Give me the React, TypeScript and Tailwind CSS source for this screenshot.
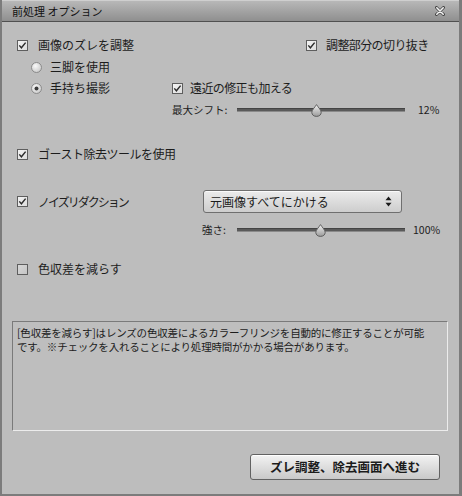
import React from "react";

const font = "font-['Noto_Sans_CJK_JP','Noto_Sans_CJK_SC',sans-serif]";

function Check({ checked = true }: { checked?: boolean }) {
  return (
    <svg width="11" height="11" viewBox="0 0 11 11" className="shrink-0">
      <defs>
        <linearGradient id={checked ? "cbg1" : "cbg0"} x1="0" y1="0" x2="1" y2="1">
          <stop offset="0" stopColor={checked ? "#f4f4f4" : "#d8d8d8"} />
          <stop offset="1" stopColor={checked ? "#dcdcdc" : "#c4c4c4"} />
        </linearGradient>
      </defs>
      <rect x="0.5" y="0.5" width="10" height="10" fill={`url(#${checked ? "cbg1" : "cbg0"})`} stroke="#5e5e5e" />
      {checked && (
        <path d="M2.3 5.4 L4.4 7.8 L8.6 2.6" fill="none" stroke="#2a2a2a" strokeWidth="1.4" />
      )}
    </svg>
  );
}

function Radio({ checked = false }: { checked?: boolean }) {
  return (
    <svg width="11" height="11" viewBox="0 0 11 11" className="shrink-0">
      <defs>
        <radialGradient id="rg" cx="0.4" cy="0.35" r="0.7">
          <stop offset="0" stopColor="#fafafa" />
          <stop offset="1" stopColor="#c8c8c8" />
        </radialGradient>
      </defs>
      <circle cx="5.5" cy="5.5" r="5" fill="url(#rg)" stroke="#8a8a8a" />
      {checked && <circle cx="5.5" cy="5.5" r="2" fill="#3a3a3a" />}
    </svg>
  );
}

function Thumb() {
  return (
    <svg width="11" height="13" viewBox="0 0 11 13">
      <defs>
        <linearGradient id="tg" x1="0" y1="0" x2="0" y2="1">
          <stop offset="0" stopColor="#f2f2f2" />
          <stop offset="1" stopColor="#9a9a9a" />
        </linearGradient>
      </defs>
      <path d="M5.5 0.6 C6.6 2.6 10.2 6 10.2 8.3 C10.2 10.8 8.2 12.4 5.5 12.4 C2.8 12.4 0.8 10.8 0.8 8.3 C0.8 6 4.4 2.6 5.5 0.6 Z" fill="url(#tg)" stroke="#555" strokeWidth="0.9" />
    </svg>
  );
}

function Slider({ pos }: { pos: number }) {
  return (
    <div className="relative w-[168px] h-[20px] flex items-center">
      <div className="w-full h-[4px] bg-[#5a5a5a] border-t border-[#444] border-b border-b-[#8a8a8a]" />
      <div className="absolute top-[4px]" style={{ left: pos }}>
        <Thumb />
      </div>
    </div>
  );
}

export default function App() {
  return (
    <div className={`${font} w-[462px] h-[496px] bg-[#bdbdbd] text-[#1c1c1c] flex flex-col border-l-2 border-r-[3px] border-b-2 border-[#7c7c7c] overflow-hidden`}>
      {/* Title bar */}
      <div className="h-[22px] shrink-0 flex items-center justify-between pl-[10px] pr-[14px] bg-gradient-to-b from-[#b8b8b8] to-[#8f8f8f] border-t border-[#cfcfcf] border-b border-b-[#505050]">
        <span className="text-[11px] leading-none text-[#111]">前処理 オプション</span>
        <svg width="10" height="10" viewBox="0 0 10 10">
          <path d="M1.5 1.5 L8.5 8.5 M8.5 1.5 L1.5 8.5" stroke="#444" strokeWidth="3" strokeLinecap="round" />
          <path d="M1.8 1.8 L8.2 8.2 M8.2 1.8 L1.8 8.2" stroke="#f4f4f4" strokeWidth="1.6" strokeLinecap="round" />
        </svg>
      </div>

      {/* Row 1 */}
      <div className="mt-[13px] h-[20px] flex items-center pl-[15px]">
        <div className="w-[289px] flex items-center gap-[10px]">
          <Check />
          <span className="text-[12px] leading-none">画像のズレを調整</span>
        </div>
        <div className="flex items-center gap-[9px]">
          <Check />
          <span className="text-[12px] leading-none tracking-[-0.6px]">調整部分の切り抜き</span>
        </div>
      </div>

      {/* Row 2 */}
      <div className="mt-[2px] h-[20px] flex items-center pl-[29px] gap-[8px]">
        <Radio />
        <span className="text-[12px] leading-none">三脚を使用</span>
      </div>

      {/* Row 3 */}
      <div className="mt-[1px] h-[20px] flex items-center pl-[29px]">
        <div className="w-[141px] flex items-center gap-[8px]">
          <Radio checked />
          <span className="text-[12px] leading-none">手持ち撮影</span>
        </div>
        <div className="flex items-center gap-[7px]">
          <Check />
          <span className="text-[12px] leading-none tracking-[-0.6px]">遠近の修正も加える</span>
        </div>
      </div>

      {/* Row 4 */}
      <div className="mt-[2px] h-[20px] flex items-center pl-[170px]">
        <span className="w-[65px] text-[10.5px] leading-none">最大シフト:</span>
        <Slider pos={74} />
        <span className="ml-[13px] text-[10.5px] leading-none">12%</span>
      </div>

      {/* Row 5 */}
      <div className="mt-[24px] h-[20px] flex items-center pl-[15px] gap-[10px]">
        <Check />
        <span className="text-[12px] leading-none tracking-[-0.5px]">ゴースト除去ツールを使用</span>
      </div>

      {/* Row 6 */}
      <div className="mt-[26px] h-[23px] flex items-center pl-[15px]">
        <div className="w-[186px] flex items-center gap-[10px]">
          <Check />
          <span className="text-[12px] leading-none tracking-[-2px]">ノイズリダクション</span>
        </div>
        <div className="w-[199px] h-[23px] rounded-[3px] border border-[#6f6f6f] bg-gradient-to-b from-[#ececec] to-[#cdcdcd] flex items-center justify-between pl-[6px] pr-[9px] shadow-[inset_0_1px_0_#fafafa]">
          <span className="text-[12px] leading-none">元画像すべてにかける</span>
          <svg width="7" height="11" viewBox="0 0 7 11">
            <path d="M3.5 0.5 L6.5 4.3 L0.5 4.3 Z" fill="#1a1a1a" />
            <path d="M3.5 10.5 L6.5 6.7 L0.5 6.7 Z" fill="#1a1a1a" />
          </svg>
        </div>
      </div>

      {/* Row 7 */}
      <div className="mt-[7px] h-[20px] flex items-center pl-[200px]">
        <span className="w-[35px] text-[10.5px] leading-none">強さ:</span>
        <Slider pos={78} />
        <span className="ml-[8px] text-[10.5px] leading-none">100%</span>
      </div>

      {/* Row 8 */}
      <div className="mt-[19px] h-[20px] flex items-center pl-[15px] gap-[10px]">
        <Check checked={false} />
        <span className="text-[12px] leading-none">色収差を減らす</span>
      </div>

      {/* Description box */}
      <div className="mt-[42px] ml-[10px] w-[436px] h-[110px] border border-[#7a7a7a] border-r-[#ececec] border-b-[#ececec] bg-[#bebebe] px-[4px] pt-[4px]">
        <p className="text-[10.5px] leading-[14px] whitespace-nowrap tracking-[-0.2px]">
          [色収差を減らす]はレンズの色収差によるカラーフリンジを自動的に修正することが可能
          <br />
          です。※チェックを入れることにより処理時間がかかる場合があります。
        </p>
      </div>

      {/* Button */}
      <div className="mt-[23px] flex pl-[248px]">
        <div className="w-[190px] h-[26px] rounded-[3px] border border-[#626262] bg-gradient-to-b from-[#f3f3f3] to-[#c9c9c9] flex items-center justify-center shadow-[inset_0_1px_0_#ffffff]">
          <span className="text-[12.5px] font-bold leading-none">ズレ調整、除去画面へ進む</span>
        </div>
      </div>
    </div>
  );
}
